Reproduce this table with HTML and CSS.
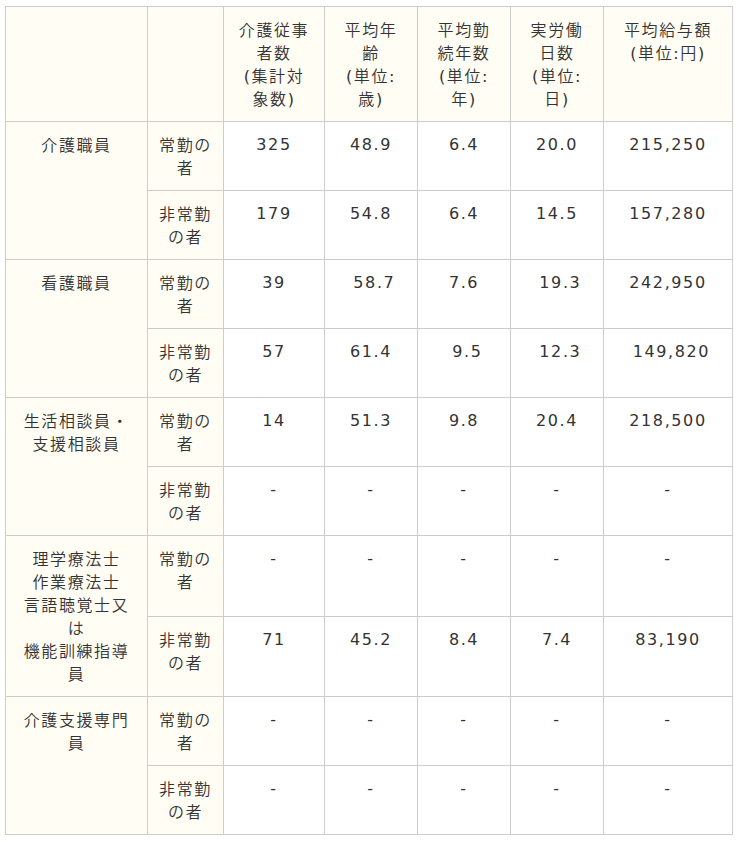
FILE: index.html
```html
<!DOCTYPE html>
<html lang="ja">
<head>
<meta charset="utf-8">
<link rel="stylesheet" href="styles.css">
</head>
<body>
<table class="stats">
  <colgroup>
    <col class="c1"><col class="c2"><col class="c3"><col class="c4"><col class="c5"><col class="c6"><col class="c7">
  </colgroup>
  <thead>
    <tr>
      <th></th>
      <th></th>
      <th>介護従事<br>者数<br><span class="lat">(</span>集計対<br>象数<span class="lat">)</span></th>
      <th>平均年<br>齢<br><span class="lat">(</span>単位<span class="lat">:</span><br>歳<span class="lat">)</span></th>
      <th>平均勤<br>続年数<br><span class="lat">(</span>単位<span class="lat">:</span><br>年<span class="lat">)</span></th>
      <th>実労働<br>日数<br><span class="lat">(</span>単位<span class="lat">:</span><br>日<span class="lat">)</span></th>
      <th>平均給与額<br><span class="lat">(</span>単位<span class="lat">:</span>円<span class="lat">)</span></th>
    </tr>
  </thead>
  <tbody>
    <tr>
      <th rowspan="2">介護職員</th>
      <th>常勤の<br>者</th>
      <td>325</td><td>48.9</td><td>6.4</td><td>20.0</td><td>215,250</td>
    </tr>
    <tr>
      <th>非常勤<br>の者</th>
      <td>179</td><td>54.8</td><td>6.4</td><td>14.5</td><td>157,280</td>
    </tr>
    <tr>
      <th rowspan="2">看護職員</th>
      <th>常勤の<br>者</th>
      <td>39</td><td>&nbsp;58.7</td><td>7.6</td><td>&nbsp;19.3</td><td>242,950</td>
    </tr>
    <tr>
      <th>非常勤<br>の者</th>
      <td>57</td><td>61.4</td><td>&nbsp;9.5</td><td>&nbsp;12.3</td><td>&nbsp;149,820</td>
    </tr>
    <tr>
      <th rowspan="2">生活相談員・<br>支援相談員</th>
      <th>常勤の<br>者</th>
      <td>14</td><td>51.3</td><td>9.8</td><td>20.4</td><td>218,500</td>
    </tr>
    <tr>
      <th>非常勤<br>の者</th>
      <td>-</td><td>-</td><td>-</td><td>-</td><td>-</td>
    </tr>
    <tr>
      <th rowspan="2">理学療法士<br>作業療法士<br>言語聴覚士又<br>は<br>機能訓練指導<br>員</th>
      <th>常勤の<br>者</th>
      <td>-</td><td>-</td><td>-</td><td>-</td><td>-</td>
    </tr>
    <tr>
      <th>非常勤<br>の者</th>
      <td>71</td><td>45.2</td><td>8.4</td><td>7.4</td><td>83,190</td>
    </tr>
    <tr>
      <th rowspan="2">介護支援専門<br>員</th>
      <th>常勤の<br>者</th>
      <td>-</td><td>-</td><td>-</td><td>-</td><td>-</td>
    </tr>
    <tr>
      <th>非常勤<br>の者</th>
      <td>-</td><td>-</td><td>-</td><td>-</td><td>-</td>
    </tr>
  </tbody>
</table>
</body>
</html>
```

FILE: styles.css
```css
html, body {
  margin: 0;
  padding: 0;
  background: #ffffff;
}

body {
  padding: 6px 0 0 5px;
  font-family: "DejaVu Sans", "Noto Sans CJK JP", sans-serif;
  font-size: 16px;
  color: #333333;
}

.stats {
  border-collapse: collapse;
  table-layout: fixed;
  width: 727px;
  letter-spacing: 0.1em;
  line-height: 23px;
}

.c1 { width: 142px; }
.c2 { width: 76px; }
.c3 { width: 101px; }
.c4 { width: 93px; }
.c5 { width: 93px; }
.c6 { width: 93px; }
.c7 { width: 129px; }

.stats th,
.stats td {
  border: 1px solid #cccccc;
  padding: 11px 4px;
  text-align: center;
  vertical-align: top;
  font-weight: normal;
  white-space: nowrap;
}

.stats th {
  background: #fffdf4;
  font-family: "Noto Sans CJK JP", sans-serif;
  font-weight: 350;
}

.stats th .lat {
  font-family: "DejaVu Sans", sans-serif;
  font-weight: 400;
  line-height: 0;
}

.stats td {
  background: #ffffff;
}
```
